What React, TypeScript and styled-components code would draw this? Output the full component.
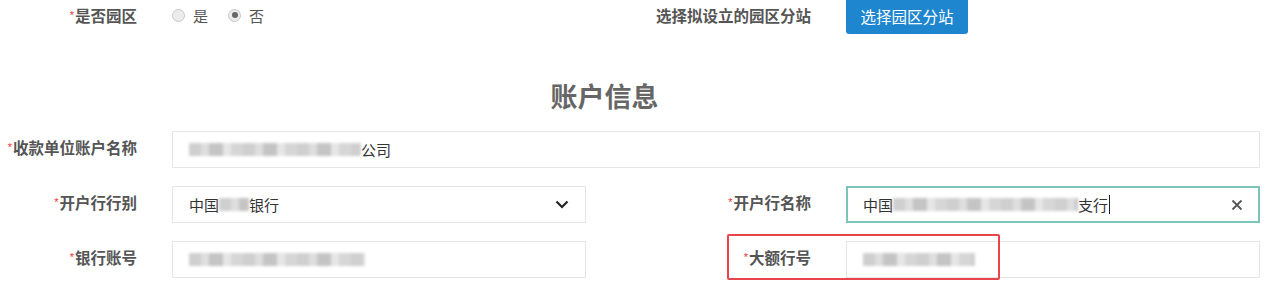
import React from 'react';
import styled, { createGlobalStyle } from 'styled-components';

const GlobalStyle = createGlobalStyle`
    body {
        margin: 0;
        background: #fff;
        font-family: "Liberation Sans", "Noto Sans CJK SC", sans-serif;
        color: #333;
    }
`;

const Page = styled.div`
    width: 1277px;
    height: 307px;
    overflow: hidden;
`;

const Grid = styled.div<{ $gap?: number }>`
    display: grid;
    grid-template-columns: 137px 414px 190px 414px;
    column-gap: 35px;
    align-items: center;
    position: relative;
    margin-bottom: ${(p) => p.$gap ?? 18}px;
`;

const Label = styled.div`
    text-align: right;
    font-size: 15.5px;
    font-weight: bold;
    color: #555;
    white-space: nowrap;
    padding-bottom: 5px;
    .req {
        color: #e33;
        font-size: 11px;
        font-weight: normal;
        vertical-align: 3px;
        margin-right: 1px;
    }
`;

const Title = styled.h2`
    margin: 44px 0 13px;
    line-height: 40px;
    height: 40px;
    text-align: center;
    font-size: 27px;
    font-weight: bold;
    color: #666;
    padding-right: 68px;
`;

const RadioGroup = styled.div`
    display: flex;
    align-items: center;
    gap: 20px;
    font-size: 15px;
    color: #555;
    padding-bottom: 4px;
`;

const RadioItem = styled.label`
    display: flex;
    align-items: center;
    gap: 8px;
`;

const RadioDot = styled.span<{ $checked?: boolean }>`
    width: 13px;
    height: 13px;
    border-radius: 50%;
    border: 1px solid #c8c8c8;
    background: #ececec;
    box-sizing: border-box;
    display: inline-flex;
    align-items: center;
    justify-content: center;
    &::after {
        content: '';
        width: 6px;
        height: 6px;
        border-radius: 50%;
        background: ${(p) => (p.$checked ? '#666' : 'transparent')};
    }
`;

const Button = styled.button`
    width: 122px;
    height: 36px;
    margin-top: -2px;
    border: none;
    border-radius: 3px;
    background: #1e86cf;
    color: #fff;
    font-size: 15.5px;
    font-family: inherit;
    cursor: pointer;
`;

const Field = styled.div<{ $focus?: boolean; $wide?: boolean }>`
    grid-column: ${(p) => (p.$wide ? '2 / 5' : 'auto')};
    height: 37px;
    box-sizing: border-box;
    border: ${(p) => (p.$focus ? '2px solid #7cc4b7' : '1px solid #e6e6e6')};
    padding: 0 ${(p) => (p.$focus ? 15 : 16)}px;
    display: flex;
    align-items: center;
    font-size: 15px;
    color: #333;
    background: #fff;
`;

const Value = styled.span`
    flex: 1;
    display: flex;
    align-items: center;
    white-space: nowrap;
`;

const Redacted = styled.span<{ $w: number }>`
    display: inline-block;
    width: ${(p) => p.$w}px;
    height: 13px;
    background: repeating-linear-gradient(
        90deg,
        #cfcfcf 0 12px,
        #dedede 12px 20px,
        #c4c4c4 20px 34px,
        #e6e6e6 34px 42px,
        #d6d6d6 42px 54px
    );
    filter: blur(1.6px);
`;

const Caret = styled.span`
    display: inline-block;
    width: 1px;
    height: 19px;
    background: #222;
    margin-left: 1px;
`;

const Highlight = styled.div`
    position: absolute;
    left: 727px;
    top: -7px;
    width: 273px;
    height: 46px;
    box-sizing: border-box;
    border: 2px solid #e8454b;
    border-radius: 2px;
    pointer-events: none;
`;

const Req = () => <span className="req">*</span>;

const Chevron = () => (
    <svg width="14" height="9" viewBox="0 0 14 9">
        <path d="M1.5 1.5 L7 7 L12.5 1.5" fill="none" stroke="#222" strokeWidth="2.2" />
    </svg>
);

const Close = () => (
    <svg width="12" height="12" viewBox="0 0 12 12">
        <path d="M1.5 1.5 L10.5 10.5 M10.5 1.5 L1.5 10.5" fill="none" stroke="#555" strokeWidth="1.8" />
    </svg>
);

const App = () => {
    return (
        <Page>
            <GlobalStyle />
            <Grid $gap={0} style={{ height: 34 }}>
                <Label>
                    <Req />
                    是否园区
                </Label>
                <RadioGroup>
                    <RadioItem>
                        <RadioDot />是
                    </RadioItem>
                    <RadioItem>
                        <RadioDot $checked />否
                    </RadioItem>
                </RadioGroup>
                <Label>选择拟设立的园区分站</Label>
                <div>
                    <Button>选择园区分站</Button>
                </div>
            </Grid>

            <Title>账户信息</Title>

            <Grid>
                <Label>
                    <Req />
                    收款单位账户名称
                </Label>
                <Field $wide>
                    <Value>
                        <Redacted $w={172} />
                        公司
                    </Value>
                </Field>
            </Grid>

            <Grid>
                <Label>
                    <Req />
                    开户行行别
                </Label>
                <Field>
                    <Value>
                        中国
                        <Redacted $w={30} />
                        银行
                    </Value>
                    <Chevron />
                </Field>
                <Label>
                    <Req />
                    开户行名称
                </Label>
                <Field $focus>
                    <Value>
                        中国
                        <Redacted $w={185} />
                        支行
                        <Caret />
                    </Value>
                    <Close />
                </Field>
            </Grid>

            <Grid>
                <Label>
                    <Req />
                    银行账号
                </Label>
                <Field>
                    <Value>
                        <Redacted $w={176} />
                    </Value>
                </Field>
                <Label>
                    <Req />
                    大额行号
                </Label>
                <Field>
                    <Value>
                        <Redacted $w={112} />
                    </Value>
                </Field>
                <Highlight />
            </Grid>
        </Page>
    );
};

export default App;
